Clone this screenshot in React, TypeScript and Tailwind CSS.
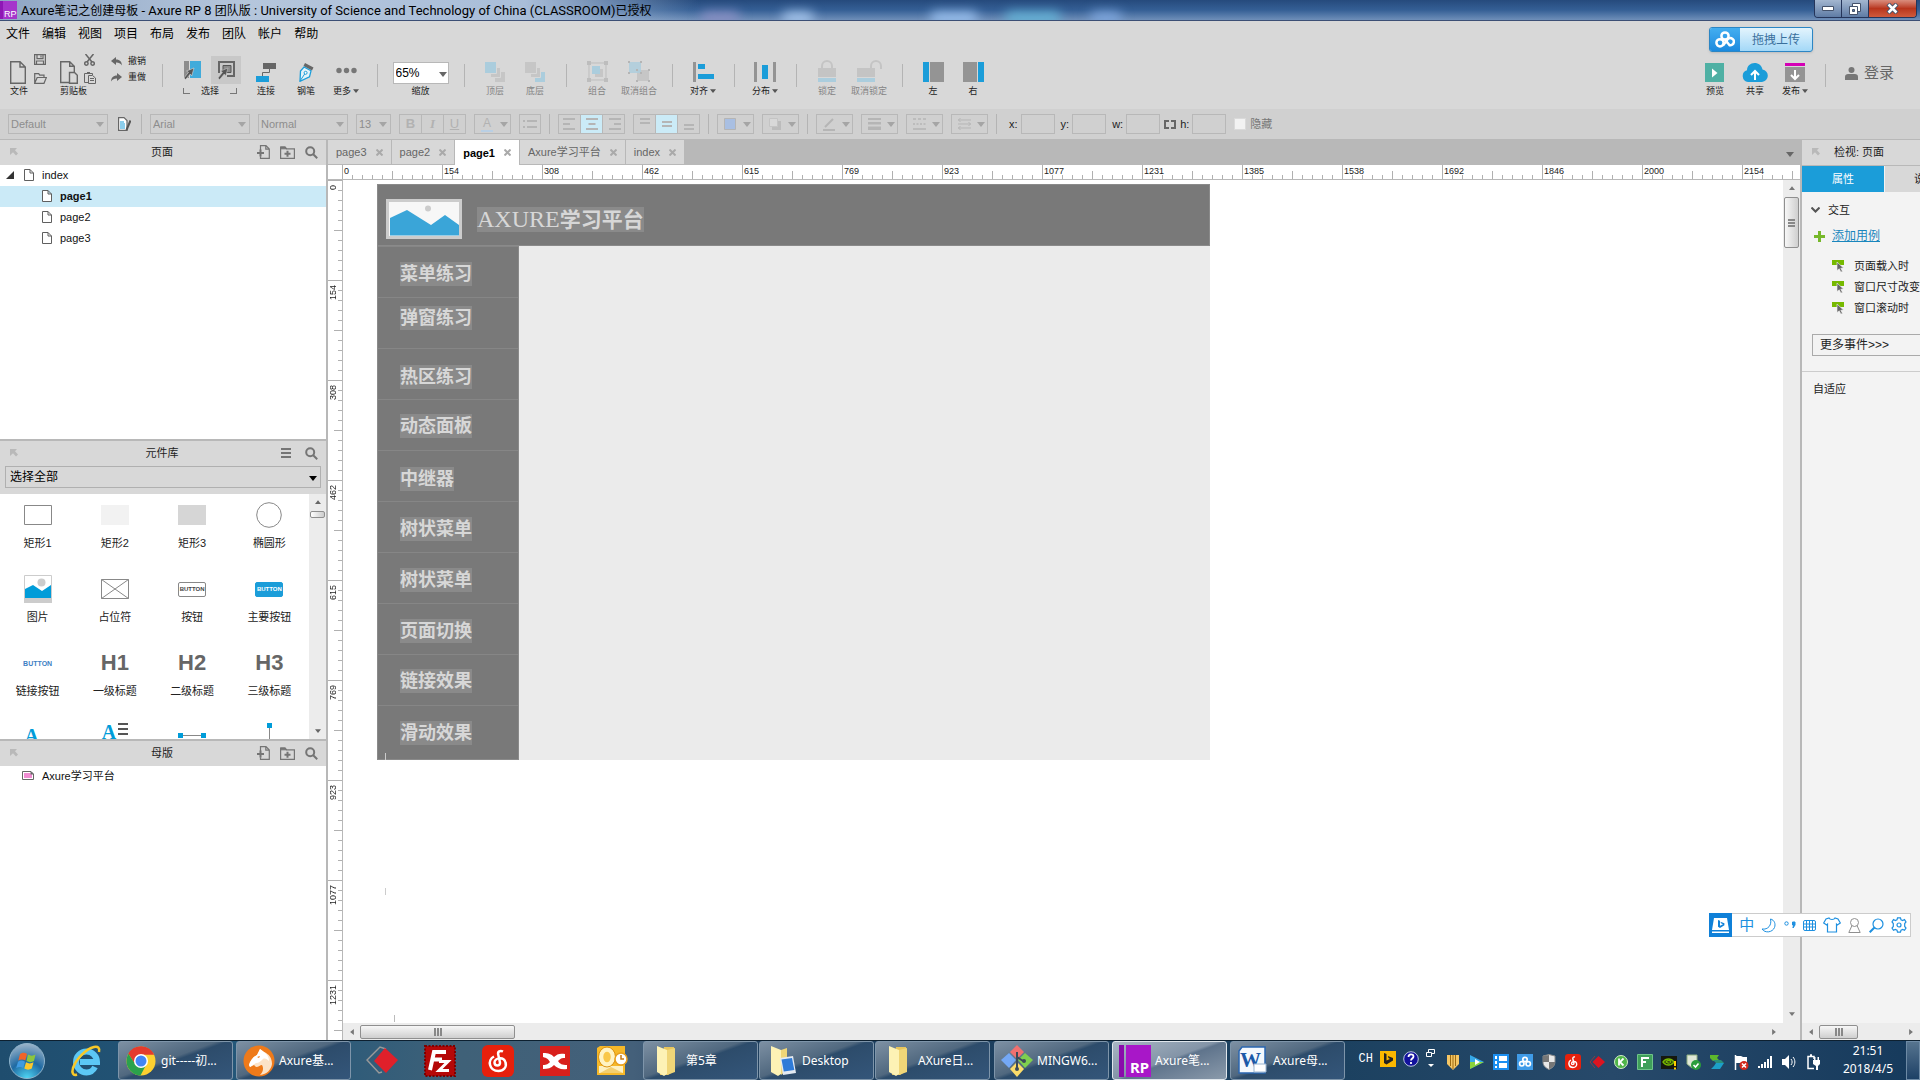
import React from "react";
import { clsx } from "clsx";

/* ---------- shared pieces ---------- */

const Caret = ({ className }: { className?: string }) => (
  <svg className={className} width="8" height="5" viewBox="0 0 8 5" fill="currentColor" aria-hidden="true">
    <path d="M0 0h8L4 5z" />
  </svg>
);

const Separator = () => (
  <div className="flex w-[22px] shrink-0 justify-center pt-2.5">
    <div className="h-[23px] w-px bg-[#b4b4b4]" />
  </div>
);

interface ToolProps {
  label: string;
  children: React.ReactNode;
  disabled?: boolean;
  caret?: boolean;
  wide?: boolean;
}

const Tool = ({ label, children, disabled, caret, wide }: ToolProps) => (
  <button
    type="button"
    disabled={disabled}
    className={clsx(
      "flex shrink-0 flex-col items-center",
      wide ? "w-11" : "w-10",
      disabled ? "text-[#858585]" : "text-[#222]"
    )}
  >
    <span className="flex h-[30px] items-end pb-0.5">{children}</span>
    <span className="flex h-3.5 items-center gap-0.5 text-[9px] leading-[14px] whitespace-nowrap">
      {label}
      {caret && <Caret className="h-1.5 w-1.5 text-[#555]" />}
    </span>
  </button>
);

interface SelectBoxProps {
  label: string;
  value: string;
  className: string;
}

const SelectBox = ({ label, value, className }: SelectBoxProps) => (
  <div className={clsx("relative h-5 shrink-0", className)}>
    <select
      aria-label={label}
      defaultValue={value}
      className="block h-full w-full appearance-none border border-[#b8b8b8] bg-transparent pl-0.5 text-[11px] leading-4 text-[#8d8d8d]"
    >
      <option>{value}</option>
    </select>
    <Caret className="pointer-events-none absolute top-2 right-1 text-[#a5a5a5]" />
  </div>
);

const CornerArrow = () => (
  <svg width="8" height="8" viewBox="0 0 8 8" fill="#b9b9b9" aria-hidden="true">
    <path d="M0 0h7L5 2.200l3 3.300L6 7.500 3 4.200 0 7z" />
  </svg>
);

const AddPageIcon = () => (
  <svg width="13" height="14" viewBox="0 0 13 14" fill="none" stroke="#757575" aria-hidden="true">
    <path d="M3.500 5V.7h5.500l3.300 3.300v9.300H3.500v-2M8.800.7v3.500h3.500" strokeWidth="1.200" />
    <path d="M0 8h7M3.500 4.500v7" strokeWidth="2" />
  </svg>
);

const AddFolderIcon = () => (
  <svg width="15" height="13" viewBox="0 0 15 13" fill="none" stroke="#757575" aria-hidden="true">
    <path d="M.6 12.400V1h4.600l1.300 1.800h7.900v9.600z" strokeWidth="1.200" />
    <path d="M.6 1h4.600l1.300 1.800H.6z" fill="#757575" />
    <path d="M4.500 7.700h6M7.500 4.700v6" strokeWidth="2" />
  </svg>
);

const SearchIcon = () => (
  <svg width="13" height="13" viewBox="0 0 13 13" fill="none" stroke="#757575" strokeWidth="2" aria-hidden="true">
    <circle cx="5.200" cy="5.200" r="4" />
    <path d="M8 8l4.200 4.200" />
  </svg>
);

const ListIcon = () => (
  <svg width="10" height="10" viewBox="0 0 10 10" stroke="#757575" strokeWidth="2" aria-hidden="true">
    <path d="M0 1h10M0 5h10M0 9h10" />
  </svg>
);

const PageIcon = ({ className }: { className?: string }) => (
  <svg className={className} width="10" height="12" viewBox="0 0 10 12" fill="#fff" stroke="#5f5f5f" aria-hidden="true">
    <path d="M.5.5h5.500l3.500 3.500v7.500h-9zM6 .5V4h3.500" />
  </svg>
);

const PanelHeader = ({ title, children }: { title: string; children: React.ReactNode }) => (
  <div className="relative flex h-[25px] shrink-0 items-center justify-between bg-[#d8d8d8] pr-2 pb-px pl-2.5">
    <CornerArrow />
    <h2 className="absolute inset-x-0 pr-0.5 text-center text-[11px] leading-4 text-[#222]">{title}</h2>
    <div className="relative flex items-center gap-2.5">{children}</div>
  </div>
);

/* ---------- title bar and menu ---------- */

const TitleBar = () => (
  <header className="relative flex h-[21px] shrink-0 items-center overflow-hidden border-b border-[#3c4f75] bg-[linear-gradient(180deg,#264a7c_0%,#355f95_50%,#6f8fb9_100%)]">
    <div className="absolute inset-y-0 left-0 w-[700px] bg-[linear-gradient(90deg,#8fa6c4_0%,#b5c6dc_35%,#a9bed9_75%,#a9bed900_100%)]" />
    <div className="absolute top-3 left-[700px] h-3 w-10 rounded-full bg-[#8a8fc4] blur-[6px]" />
    <div className="absolute top-3 left-[782px] h-3 w-8 rounded-full bg-[#a9c9f0] blur-[6px]" />
    <div className="absolute top-3 left-[930px] h-3 w-12 rounded-full bg-[#9cc3f2] blur-[6px]" />
    <div className="absolute top-3 left-[1005px] h-3 w-14 rounded-full bg-[#63b5d8] blur-[6px]" />
    <div className="absolute top-3 left-[1090px] h-3 w-8 rounded-full bg-[#7fa8e0] blur-[6px]" />
    <svg className="relative shrink-0" width="17" height="18" viewBox="0 0 17 18" aria-hidden="true">
      <path fill="#8e17b5" d="M0 0h3v18H0z" />
      <path fill="#a535cb" d="M3 0h14v18H3z" />
      <text x="4" y="16" fontSize="9" fontFamily="Liberation Sans" fill="#fff">RP</text>
    </svg>
    <h1 className="relative ml-1 pt-0.5 font-['Roboto','Noto_Sans_CJK_SC',sans-serif] text-[13px] leading-4 whitespace-nowrap text-black">
      Axure<span className="text-[12px]">笔记之创建母板</span> - Axure RP 8 <span className="text-[12px]">团队版</span> : University of
      Science and Technology of China (CLASSROOM)<span className="text-[12px]">已授权</span>
    </h1>
    <div className="relative mr-[3px] ml-auto flex h-[18px] self-start overflow-hidden rounded-b-[4px] border border-t-0 border-[#25355a]">
      <button type="button" aria-label="最小化" className="flex w-[27px] items-center justify-center border-r border-[#25355a] bg-linear-to-b from-[#a3b6d0] to-[#5f7ca5]">
        <svg width="12" height="5" viewBox="0 0 12 5"><path fill="#fff" stroke="#44526b" d="M.5.5h11v4H.5z" /></svg>
      </button>
      <button type="button" aria-label="还原" className="flex w-[27px] items-center justify-center border-r border-[#25355a] bg-linear-to-b from-[#a3b6d0] to-[#5f7ca5]">
        <svg width="12" height="12" viewBox="0 0 12 12" fill="#fff" stroke="#44526b">
          <path d="M3.500.5h8v8h-8z" />
          <path d="M.5 3.500h8v8h-8z" />
          <path fill="#5f7ca5" d="M3.500 6.500h2v2h-2z" />
        </svg>
      </button>
      <button type="button" aria-label="关闭" className="flex w-[47px] items-center justify-center bg-linear-to-b from-[#d98d7d] via-[#b8351c] to-[#cf5a3c]">
        <svg width="13" height="11" viewBox="0 0 13 11">
          <path d="M2 1l9 9M11 1L2 10" stroke="#44526b" strokeWidth="4.500" />
          <path d="M2.500 1.500l8 8M10.500 1.500l-8 8" stroke="#fff" strokeWidth="2.500" />
        </svg>
      </button>
    </div>
  </header>
);

const MENUS = ["文件", "编辑", "视图", "项目", "布局", "发布", "团队", "帐户", "帮助"];

const MenuBar = () => (
  <nav className="flex h-[25px] shrink-0 items-center gap-3 bg-[#d8d8d8] px-1.5 text-[12px] leading-4 text-black">
    {MENUS.map((menu) => (
      <button type="button" key={menu}>{menu}</button>
    ))}
  </nav>
);

const UploadWidget = () => (
  <button
    type="button"
    className="absolute top-[27px] right-[107px] flex h-[25px] w-[104px] overflow-hidden rounded-[3px] border border-[#2c86c4] bg-linear-to-b from-[#e3f4fd] to-[#a3d8f7] shadow"
  >
    <span className="flex h-full w-[30px] shrink-0 items-center justify-center bg-linear-to-b from-[#43aef0] to-[#1b8ade]">
      <svg width="20" height="17" viewBox="0 0 20 17" fill="none" stroke="#fff" strokeWidth="2.500" aria-hidden="true">
        <circle cx="10" cy="5" r="3.600" />
        <circle cx="5" cy="11.800" r="3.600" />
        <path d="M10 8.500l4.500 5.700a3.600 3.600 0 1 0-2.600-4.800L8 14.500" />
      </svg>
    </span>
    <span className="flex-1 text-center text-[12px] leading-[24px] text-[#3a6f9c]">拖拽上传</span>
  </button>
);

/* ---------- main toolbar ---------- */

const Toolbar = () => (
  <div className="flex h-[63px] shrink-0 bg-[#d8d8d8] pt-2">
    <div className="ml-2.5 w-[50px] shrink-0 text-[9px] leading-[14px] text-[#222]">
      <div className="flex h-[30px] items-end gap-2">
        <button type="button" aria-label="新建">
          <svg width="16" height="23" viewBox="0 0 16 23" fill="none" stroke="#666" strokeWidth="1.400">
            <path d="M.7.7h9.300l5.300 5.300v16.300H.7zM10 .7V6h5.300" />
          </svg>
        </button>
        <div className="flex h-full flex-col justify-between">
          <button type="button" aria-label="保存">
            <svg width="12" height="11" viewBox="0 0 12 11" fill="none" stroke="#666" strokeWidth="1.200">
              <path d="M.6.6h10.800v9.800H.6zM3 .6v4h6v-4M2.500 10.400V7h7v3.400M7 1.500v2" />
            </svg>
          </button>
          <button type="button" aria-label="打开">
            <svg width="13" height="11" viewBox="0 0 13 11" fill="none" stroke="#666" strokeWidth="1.200">
              <path d="M.7 10V.7h4l1 1.500H10V4M.7 10.300L3.200 4.500h9.200l-2.400 5.800z" />
            </svg>
          </button>
        </div>
      </div>
      文件
    </div>

    <div className="w-[51px] shrink-0 text-[9px] leading-[14px] text-[#222]">
      <div className="flex h-[30px] items-end gap-1.5">
        <button type="button" aria-label="粘贴">
          <svg width="18" height="23" viewBox="0 0 18 23" fill="none" stroke="#666" strokeWidth="1.400">
            <path d="M9 21.500H.7V.7h9l4.600 4.600v6M9.700.7v4.600h4.600" />
            <path d="M9.500 11.500h5l2.800 2.800v8H9.500z" />
          </svg>
        </button>
        <div className="flex h-full flex-col justify-between">
          <button type="button" aria-label="剪切">
            <svg width="11" height="12" viewBox="0 0 11 12" fill="none" stroke="#666" strokeWidth="1.500">
              <path d="M1.500 0L8 8M9.500 0L3 8" />
              <circle cx="2.400" cy="9.500" r="1.700" />
              <circle cx="8.600" cy="9.500" r="1.700" />
            </svg>
          </button>
          <button type="button" aria-label="复制">
            <svg width="12" height="12" viewBox="0 0 12 12" fill="none" stroke="#666">
              <path d="M4 10.500H.5v-9h8V3M3 .5h3" />
              <path d="M4.500 3.500h4l3 2.500v5.500h-7zM6 6.500h4M6 8.500h4" />
            </svg>
          </button>
        </div>
      </div>
      剪贴板
    </div>

    <div className="flex h-[30px] w-10 shrink-0 flex-col justify-between text-[9px] leading-[14px] text-[#222]">
      <button type="button" className="flex items-center gap-1.5">
        <svg width="11" height="9" viewBox="0 0 11 9" fill="#666"><path d="M0 4l5-4v2.500c4 0 6 2.500 5.800 6C9.500 6.200 7.500 5.500 5 5.600V8z" /></svg>
        撤销
      </button>
      <button type="button" className="flex items-center gap-1.5">
        <svg width="11" height="9" viewBox="0 0 11 9" fill="#666"><path d="M11 4L6 0v2.500C2 2.500 0 5 .2 8.500 1.500 6.200 3.500 5.500 6 5.600V8z" /></svg>
        重做
      </button>
    </div>

    <Separator />

    <div className="w-[73px] shrink-0">
      <div className="flex h-[30px] items-end gap-1 pl-1">
        <button type="button" aria-label="相交选中" className="flex h-7 w-[30px] items-center justify-center">
          <svg width="17" height="19" viewBox="0 0 17 19">
            <path fill="#8c8c8c" d="M0 0h5v17H0z" />
            <path fill="#41abdb" d="M6 0h11v17H6z" />
            <path fill="#555" stroke="#d8d8d8" strokeWidth=".6" d="M10 7L2.500 10l2 1.300L0 17l1.700 1.500L6.300 13l1.400 2z" />
          </svg>
        </button>
        <button type="button" aria-label="包含选中" className="flex h-7 w-[30px] items-center justify-center bg-[#c8c8c8]">
          <svg width="17" height="19" viewBox="0 0 17 19">
            <path fill="none" stroke="#666" strokeWidth="2" d="M1 12V1h15v14H9" />
            <path fill="#8c8c8c" stroke="#555" d="M5 4.500h8v7H5z" />
            <path fill="#555" stroke="#c8c8c8" strokeWidth=".6" d="M10 7L2.500 10l2 1.300L0 17l1.700 1.500L6.300 13l1.400 2z" />
          </svg>
        </button>
      </div>
      <div className="flex h-3.5 items-center gap-[11px] pl-2.5 text-[9px] leading-[14px] text-[#222]">
        <span className="h-1.5 w-[7px] border-b border-l border-[#777]" />
        选择
        <span className="h-1.5 w-[7px] border-r border-b border-[#777]" />
      </div>
    </div>

    <Tool label="连接">
      <svg width="20" height="20" viewBox="0 0 20 20">
        <path fill="#666" d="M7 1h13v6H7z" />
        <path fill="#1b9dd9" d="M0 14h13v6H0z" />
        <path fill="none" stroke="#666" d="M13.500 7v3.500h-7V14" />
      </svg>
    </Tool>
    <Tool label="钢笔">
      <svg width="15" height="19" viewBox="0 0 15 19">
        <path fill="#666" d="M6 0l8.500 4.500L13 7.500 4.500 3z" />
        <path fill="#e5f3fa" stroke="#1b9dd9" strokeWidth="1.300" d="M5 4l7 3.800-1.500 6L1 18.300 1.500 8z" />
        <path fill="none" stroke="#1b9dd9" d="M1 18l5-7.500" />
        <circle cx="6.600" cy="9.800" r="1.500" fill="#fff" stroke="#1b9dd9" />
      </svg>
    </Tool>
    <Tool label="更多" caret>
      <svg width="21" height="20" viewBox="0 0 21 20" fill="#777">
        <circle cx="3" cy="8.500" r="2.700" />
        <circle cx="10.500" cy="8.500" r="2.700" />
        <circle cx="18" cy="8.500" r="2.700" />
      </svg>
    </Tool>

    <Separator />

    <div className="flex w-[65px] shrink-0 flex-col items-center">
      <div className="relative mt-2 h-[22px] w-14">
        <select
          id="zoom"
          defaultValue="65%"
          className="block h-full w-full appearance-none border border-[#b8b8b8] bg-white pl-0.5 text-[12px] leading-4 text-black"
        >
          <option>65%</option>
        </select>
        <Caret className="pointer-events-none absolute top-2.5 right-0.5 text-[#666]" />
      </div>
      <label htmlFor="zoom" className="text-[9px] leading-[14px] text-[#222]">缩放</label>
    </div>

    <Separator />

    <Tool label="顶层" disabled>
      <svg width="20" height="20" viewBox="0 0 20 20">
        <path fill="#c6c6c6" d="M10 10h10v10H10z" />
        <path fill="#c6c6c6" stroke="#d8d8d8" d="M5.500 5.500h10v10h-10z" />
        <path fill="#abcddd" stroke="#d8d8d8" d="M-.5-.5h12v12h-12z" />
      </svg>
    </Tool>
    <Tool label="底层" disabled>
      <svg width="20" height="20" viewBox="0 0 20 20">
        <path fill="#abcddd" d="M10 10h10v10H10z" />
        <path fill="#c6c6c6" stroke="#d8d8d8" d="M5.500 5.500h10v10h-10z" />
        <path fill="#c6c6c6" stroke="#d8d8d8" d="M-.5-.5h12v12h-12z" />
      </svg>
    </Tool>

    <Separator />

    <Tool label="组合" disabled>
      <svg width="21" height="21" viewBox="0 0 21 21">
        <path fill="none" stroke="#bdbdbd" d="M2 2h17v17H2z" />
        <path fill="#c6c6c6" d="M8 8h8v8H8z" />
        <path fill="#abcddd" d="M5 5h8v8H5z" />
        <path fill="#bdbdbd" d="M0 0h4v4H0zM17 0h4v4h-4zM0 17h4v4H0zM17 17h4v4h-4z" />
      </svg>
    </Tool>
    <Tool label="取消组合" disabled wide>
      <svg width="22" height="21" viewBox="0 0 22 21">
        <path fill="#c6c6c6" d="M9 9h12v11H9z" />
        <path fill="#abcddd" fillOpacity=".8" d="M1 1h12v11H1z" />
        <path fill="#b5b5b5" d="M0 0h2v2H0zM12 0h2v2h-2zM0 11h2v2H0zM12 11h2v2h-2zM8 8h2v2H8zM20 8h2v2h-2zM8 19h2v2H8zM20 19h2v2h-2z" />
      </svg>
    </Tool>

    <Separator />

    <Tool label="对齐" caret>
      <svg width="21" height="20" viewBox="0 0 21 20">
        <path fill="#949494" d="M0 0h3v20H0z" />
        <path fill="#1b9dd9" d="M5 2h7v5H5zM5 12h16v5H5z" />
      </svg>
    </Tool>

    <Separator />

    <Tool label="分布" caret>
      <svg width="22" height="20" viewBox="0 0 22 20">
        <path fill="#949494" d="M0 0h3v20H0zM19 0h3v20h-3z" />
        <path fill="#1b9dd9" d="M8 3h6v14H8z" />
      </svg>
    </Tool>

    <Separator />

    <Tool label="锁定" disabled>
      <svg width="18" height="22" viewBox="0 0 18 22">
        <path fill="none" stroke="#c4c4c4" strokeWidth="2" d="M4 8V6a5 5 0 0 1 10 0v2" />
        <path fill="#c4c4c4" d="M0 8h18v9H0z" />
        <path fill="#abcddd" d="M0 18h18v4H0z" />
      </svg>
    </Tool>
    <Tool label="取消锁定" disabled wide>
      <svg width="25" height="22" viewBox="0 0 25 22">
        <path fill="none" stroke="#c4c4c4" strokeWidth="2" d="M14 8V6a5 5 0 0 1 10 0v3" />
        <path fill="#c4c4c4" d="M0 8h18v9H0z" />
        <path fill="#abcddd" d="M0 18h18v4H0z" />
      </svg>
    </Tool>

    <Separator />

    <Tool label="左">
      <svg width="21" height="20" viewBox="0 0 21 20">
        <path fill="#1b9dd9" d="M0 0h6v20H0z" />
        <path fill="#949494" d="M7 0h14v20H7z" />
      </svg>
    </Tool>
    <Tool label="右">
      <svg width="21" height="20" viewBox="0 0 21 20">
        <path fill="#949494" d="M0 0h14v20H0z" />
        <path fill="#1b9dd9" d="M15 0h6v20h-6z" />
      </svg>
    </Tool>

    <div className="ml-auto flex pr-[26px]">
      <Tool label="预览">
        <svg width="19" height="19" viewBox="0 0 19 19">
          <path fill="#4fb0a4" d="M0 0h19v19H0z" />
          <path fill="#fff" d="M7 5.500l5.500 4.500L7 14.500z" />
        </svg>
      </Tool>
      <Tool label="共享">
        <svg width="26" height="19" viewBox="0 0 26 19">
          <path fill="#1b9dd9" d="M6 19a6 6 0 0 1-1-11.700C5 3 8.500 0 12.500 0S20 2.700 20.500 6.500A6.300 6.300 0 0 1 20 19z" />
          <path fill="none" stroke="#fff" strokeWidth="2" d="M13 17V8.500M9 12l4-4 4 4" />
        </svg>
      </Tool>
      <Tool label="发布" caret>
        <svg width="20" height="19" viewBox="0 0 20 19">
          <path fill="#d400b5" d="M0 0h20v3H0z" />
          <path fill="#949494" d="M0 4h20v15H0z" />
          <path fill="none" stroke="#fff" strokeWidth="2" d="M10 7v8M6 12l4 4 4-4" />
        </svg>
      </Tool>
      <Separator />
      <button type="button" className="flex h-[38px] items-center gap-1.5 pl-2 text-[15px] leading-5 text-[#666]">
        <svg width="13" height="13" viewBox="0 0 13 13" fill="#777">
          <circle cx="6.500" cy="3" r="3" />
          <path d="M0 13V9.500C0 8 1.500 7 3 7h7c1.500 0 3 1 3 2.500V13z" />
        </svg>
        登录
      </button>
    </div>
  </div>
);

/* ---------- format bar ---------- */

const FormatSeparator = () => <div className="h-5 w-px shrink-0 bg-[#b4b4b4]" />;

const Segment = ({ children, active, label }: { children: React.ReactNode; active?: boolean; label: string }) => (
  <button
    type="button"
    aria-label={label}
    className={clsx(
      "flex h-full flex-1 items-center justify-center border-r border-[#b8b8b8] text-[13px] leading-4 text-[#b2b2b2] last:border-r-0",
      active && "bg-[#cbebf7]"
    )}
  >
    {children}
  </button>
);

const Segments = ({ children, single }: { children: React.ReactNode; single?: boolean }) => (
  <div className={clsx("flex h-5 shrink-0 overflow-hidden border border-[#b8b8b8]", single ? "w-[22px]" : "w-[67px]")}>
    {children}
  </div>
);

const DropButton = ({ children, label }: { children: React.ReactNode; label: string }) => (
  <button
    type="button"
    aria-label={label}
    className="flex h-5 w-[37px] shrink-0 items-center justify-between border border-[#b8b8b8] pr-0.5 pl-1.5 text-[#a5a5a5]"
  >
    {children}
    <Caret />
  </button>
);

const Lines = ({ d }: { d: string }) => (
  <svg width="14" height="14" viewBox="0 0 14 14" fill="none" stroke="#b5b5b5" strokeWidth="2">
    <path d={d} />
  </svg>
);

const CoordInput = ({ name }: { name: string }) => (
  <label className="flex items-center gap-[3px] text-[11px] leading-4 text-[#222]">
    {name}:
    <input type="text" className="h-5 w-[34px] border border-[#b8b8b8] bg-transparent" />
  </label>
);

const FormatBar = () => (
  <div className="flex h-[31px] shrink-0 items-center gap-2 border-b border-[#b8b8b8] bg-[#d0d0d0] px-2">
    <SelectBox label="样式" value="Default" className="w-[100px]" />
    <button type="button" aria-label="样式管理" className="mx-0.5">
      <svg width="13" height="14" viewBox="0 0 13 14" fill="none">
        <path fill="#fff" stroke="#666" strokeWidth="1.200" d="M.6.6H6l3 3v9.800H.6z" />
        <path stroke="#1b9dd9" d="M2 5h4M2 7h5M2 9h5M2 11h5" />
        <path stroke="#555" strokeWidth="2" d="M12.500 3.500L8.500 13" />
      </svg>
    </button>
    <FormatSeparator />
    <SelectBox label="字体" value="Arial" className="w-[100px]" />
    <SelectBox label="字型" value="Normal" className="w-[90px]" />
    <SelectBox label="字号" value="13" className="w-[35px]" />
    <Segments>
      <Segment label="粗体"><b>B</b></Segment>
      <Segment label="斜体"><i className="font-['Liberation_Serif'] font-bold">I</i></Segment>
      <Segment label="下划线"><u>U</u></Segment>
    </Segments>
    <DropButton label="文字颜色">
      <span className="border-b-2 border-[#b9cfe4] px-0.5 text-[12px] leading-[13px] text-[#b2b2b2]">A</span>
    </DropButton>
    <Segments single>
      <Segment label="项目符号"><Lines d="M0 4h2M4 4h10M0 10h2M4 10h10" /></Segment>
    </Segments>
    <FormatSeparator />
    <Segments>
      <Segment label="左对齐"><Lines d="M0 2h12M0 7h7M0 12h12" /></Segment>
      <Segment label="居中" active><Lines d="M1 2h12M3.500 7h7M1 12h12" /></Segment>
      <Segment label="右对齐"><Lines d="M2 2h12M7 7h7M2 12h12" /></Segment>
    </Segments>
    <Segments>
      <Segment label="顶部对齐"><Lines d="M2 2h10M2 6h10" /></Segment>
      <Segment label="垂直居中" active><Lines d="M2 5h10M2 9h10" /></Segment>
      <Segment label="底部对齐"><Lines d="M2 8h10M2 12h10" /></Segment>
    </Segments>
    <FormatSeparator />
    <DropButton label="填充颜色">
      <svg width="12" height="12" viewBox="0 0 12 12"><path fill="#a9bfe2" stroke="#b5b5b5" d="M.5.5h11v11H.5z" /></svg>
    </DropButton>
    <DropButton label="外部阴影">
      <svg width="12" height="12" viewBox="0 0 12 12">
        <path fill="#bcbcbc" d="M3 3h9v9H3z" />
        <path fill="#d8d8d8" stroke="#c4c4c4" d="M.5.5h8v8h-8z" />
      </svg>
    </DropButton>
    <FormatSeparator />
    <DropButton label="线段颜色">
      <svg width="13" height="13" viewBox="0 0 13 13" stroke="#b5b5b5" strokeWidth="2"><path d="M0 12h12M2 9l8-8" /></svg>
    </DropButton>
    <DropButton label="线宽">
      <svg width="13" height="12" viewBox="0 0 13 12" fill="#b5b5b5"><path d="M0 0h13v2H0zM0 4h13v2.500H0zM0 8.500h13V12H0z" /></svg>
    </DropButton>
    <DropButton label="线段类型">
      <svg width="13" height="12" viewBox="0 0 13 12" stroke="#b5b5b5" strokeWidth="1.500">
        <path d="M0 1h13" strokeDasharray="3 2" />
        <path d="M0 6h13" strokeDasharray="2 1.500" />
        <path d="M0 11h13" />
      </svg>
    </DropButton>
    <DropButton label="箭头样式">
      <svg width="13" height="12" viewBox="0 0 13 12" fill="none" stroke="#b5b5b5">
        <path d="M0 2h13M2.500 0L.5 2l2 2M0 6h13M10.500 4l2 2-2 2M0 10h13M2.500 8l-2 2 2 2" />
      </svg>
    </DropButton>
    <FormatSeparator />
    <div className="ml-1 flex items-center gap-1.5">
      <CoordInput name="x" />
      <CoordInput name="y" />
      <CoordInput name="w" />
      <button type="button" aria-label="保持宽高比" className="-mx-0.5">
        <svg width="12" height="9" viewBox="0 0 12 9" fill="none" stroke="#666" strokeWidth="2"><path d="M5 1H1v7h4M7 1h4v7H7" /></svg>
      </button>
      <CoordInput name="h" />
    </div>
    <label className="flex items-center gap-1 text-[11px] leading-4 text-[#777]">
      <input type="checkbox" className="size-3 appearance-none border border-[#dadada] bg-[#f2f2f2]" />
      隐藏
    </label>
  </div>
);

/* ---------- left panels ---------- */

const PagesPanel = () => (
  <section className="flex h-[299px] shrink-0 flex-col bg-white">
    <PanelHeader title="页面">
      <button type="button" aria-label="添加页面"><AddPageIcon /></button>
      <button type="button" aria-label="添加文件夹"><AddFolderIcon /></button>
      <button type="button" aria-label="搜索页面"><SearchIcon /></button>
    </PanelHeader>
    <ul className="text-[11px] leading-4 text-[#111]">
      <li className="flex h-[21px] items-center pb-px pl-1.5">
        <svg width="8" height="8" viewBox="0 0 8 8"><path fill="#333" d="M8 0v8H0z" /></svg>
        <PageIcon className="mr-2 ml-2.5" />
        index
      </li>
      {["page1", "page2", "page3"].map((page) => (
        <li
          key={page}
          className={clsx("flex h-[21px] items-center gap-2 pb-px pl-[42px]", page === "page1" && "bg-[#cbeaf7] font-bold")}
        >
          <PageIcon />
          {page}
        </li>
      ))}
    </ul>
  </section>
);

const WIDGETS: { label: string; icon: React.ReactNode }[] = [
  { label: "矩形1", icon: <svg width="28" height="20"><path fill="#fff" stroke="#888" d="M.5.5h27v19H.5z" /></svg> },
  { label: "矩形2", icon: <svg width="28" height="20"><path fill="#f2f2f2" d="M0 0h28v20H0z" /></svg> },
  { label: "矩形3", icon: <svg width="28" height="20"><path fill="#d6d6d6" d="M0 0h28v20H0z" /></svg> },
  { label: "椭圆形", icon: <svg width="26" height="26"><circle cx="13" cy="13" r="12.300" fill="#fff" stroke="#888" /></svg> },
  {
    label: "图片",
    icon: (
      <svg width="28" height="28">
        <path fill="#fff" stroke="#ccc" d="M.5.5h27v27H.5z" />
        <path fill="#ccc" d="M0 23h28v5H0z" />
        <circle cx="17.500" cy="7.500" r="4" fill="#ccc" />
        <path fill="#009cd9" d="M1 14l8-4 9 6 9-6v13H1z" />
      </svg>
    ),
  },
  { label: "占位符", icon: <svg width="28" height="20"><path fill="#fff" stroke="#888" d="M.5.5h27v19H.5zM.5.5l27 19M27.500.5l-27 19" /></svg> },
  { label: "按钮", icon: <span className="rounded-[2px] border border-[#888] text-center text-[6px] leading-[13px] font-bold text-[#444] w-7">BUTTON</span> },
  { label: "主要按钮", icon: <span className="w-7 rounded-[2px] border border-[#1b9dd9] bg-[#1b9dd9] text-center text-[6px] leading-[13px] font-bold text-white">BUTTON</span> },
  { label: "链接按钮", icon: <span className="text-[7px] leading-[13px] font-bold text-[#3d80c4]">BUTTON</span> },
  { label: "一级标题", icon: <span className="text-[22px] leading-6 font-bold text-[#666]">H1</span> },
  { label: "二级标题", icon: <span className="text-[22px] leading-6 font-bold text-[#666]">H2</span> },
  { label: "三级标题", icon: <span className="text-[22px] leading-6 font-bold text-[#666]">H3</span> },
];

const LibraryPanel = () => (
  <section className="flex h-[300px] shrink-0 flex-col border-t-2 border-[#b8b8b8] bg-white">
    <PanelHeader title="元件库">
      <button type="button" aria-label="选项" className="mr-1"><ListIcon /></button>
      <button type="button" aria-label="搜索元件"><SearchIcon /></button>
    </PanelHeader>
    <div className="relative h-7 shrink-0 bg-[#d8d8d8] px-[5px]">
      <select
        aria-label="元件库"
        defaultValue="选择全部"
        className="block h-[22px] w-full appearance-none border border-[#b0b0b0] bg-transparent pl-1 text-[12px] leading-4 text-black"
      >
        <option>选择全部</option>
      </select>
      <Caret className="pointer-events-none absolute top-2.5 right-[9px] text-black" />
    </div>
    <div className="flex min-h-0 flex-1">
      <div className="grid flex-1 auto-rows-[74px] grid-cols-4 overflow-hidden">
        {WIDGETS.map(({ label, icon }) => (
          <div key={label} className="flex flex-col items-center gap-[7px] pt-[7px] pr-0.5">
            <div className="flex h-7 items-center">{icon}</div>
            <div className="text-[11px] leading-[14px] text-[#222]">{label}</div>
          </div>
        ))}
        <div className="flex justify-center pt-2.5 pr-0.5">
          <span className="mr-3 font-['Liberation_Serif'] text-[20px] leading-5 font-bold text-[#009cd9]">A</span>
        </div>
        <div className="flex items-start justify-center gap-0.5 pt-1.5 pr-0.5">
          <span className="font-['Liberation_Serif'] text-[20px] leading-5 font-bold text-[#009cd9]">A</span>
          <svg width="10" height="14" stroke="#555" strokeWidth="2"><path d="M0 2h10M0 7h10M0 12h10" /></svg>
        </div>
        <div className="flex justify-center pt-3 pr-0.5">
          <svg width="28" height="10"><path stroke="#888" d="M0 7.500h28" /><path fill="#009cd9" d="M0 5h5v5H0zM23 5h5v5h-5z" /></svg>
        </div>
        <div className="flex justify-center pt-1.5 pr-0.5">
          <svg width="6" height="30"><path stroke="#888" d="M3.500 5v25" /><path fill="#009cd9" d="M1 1h5v5H1z" /></svg>
        </div>
      </div>
      <div className="flex w-[17px] flex-col items-center bg-[#ececec] py-1.5 text-[#666]">
        <Caret className="h-1 w-1.5 rotate-180" />
        <div className="mt-[7px] h-[7px] w-[15px] rounded-[2px] border border-[#8f8f8f] bg-linear-to-r from-white to-[#ccc]" />
        <Caret className="mt-auto h-1 w-1.5" />
      </div>
    </div>
  </section>
);

const MastersPanel = () => (
  <section className="flex min-h-0 flex-1 flex-col border-t-2 border-[#b8b8b8] bg-white">
    <PanelHeader title="母版">
      <button type="button" aria-label="添加母版"><AddPageIcon /></button>
      <button type="button" aria-label="添加文件夹"><AddFolderIcon /></button>
      <button type="button" aria-label="搜索母版"><SearchIcon /></button>
    </PanelHeader>
    <div className="flex h-[21px] items-center gap-2 pb-0.5 pl-[22px] text-[11px] leading-4 text-[#111]">
      <svg width="12" height="9" viewBox="0 0 12 9">
        <path fill="#fff" stroke="#666" d="M.5.5h8.500l2.500 2.500v5.500H.5z" />
        <path fill="#f08cd2" d="M2 2h6l2 1.500V7H2z" />
        <path fill="#666" d="M8.500 0L12 3.500H8.500z" />
      </svg>
      Axure学习平台
    </div>
  </section>
);

/* ---------- canvas ---------- */

const TABS = ["page3", "page2", "page1", "Axure学习平台", "index"];

const TabBar = () => (
  <div role="tablist" className="flex h-[25px] shrink-0 bg-[#b8b8b8] text-[11px] leading-4">
    {TABS.map((tab) => (
      <button
        type="button"
        role="tab"
        key={tab}
        aria-selected={tab === "page1"}
        className={clsx(
          "mr-px flex items-center gap-[9px] px-2",
          tab === "page1" ? "bg-white font-bold text-black" : "mb-px bg-[#d8d8d8] text-[#666]"
        )}
      >
        {tab}
        <svg width="7" height="7" viewBox="0 0 7 7" stroke="#aaa" strokeWidth="2"><path d="M.5.5l6 6M6.500.5l-6 6" /></svg>
      </button>
    ))}
    <Caret className="mt-3 mr-1.5 ml-auto text-[#666]" />
  </div>
);

const H_MARKS = [0, 154, 308, 462, 615, 769, 923, 1077, 1231, 1385, 1538, 1692, 1846, 2000, 2154];
const V_MARKS = [0, 154, 308, 462, 615, 769, 923, 1077, 1231];

const HorizontalRuler = () => (
  <div className="flex h-[15px] shrink-0 border-b border-[#b8b8b8] bg-white">
    <div className="w-3.5 shrink-0" />
    <div className="flex min-w-0 flex-1 overflow-hidden">
      {H_MARKS.map((mark) => (
        <div key={mark} className="relative w-[100px] shrink-0">
          <svg className="absolute inset-0" width="100" height="14" stroke="#b0b0b0" aria-hidden="true">
            <path d="M.5 0v14M10.500 10v4M20.500 10v4M30.500 10v4M40.500 10v4M50.500 6v8M60.500 10v4M70.500 10v4M80.500 10v4M90.500 10v4" />
          </svg>
          <span className="absolute top-px left-0.5 text-[9px] leading-[11px] text-[#222]">{mark}</span>
        </div>
      ))}
    </div>
  </div>
);

const VerticalRuler = () => (
  <div className="w-[15px] shrink-0 overflow-hidden border-r border-[#b8b8b8] bg-white">
    {V_MARKS.map((mark) => (
      <div key={mark} className="relative h-[100px]">
        <svg className="absolute inset-0" width="14" height="100" stroke="#b0b0b0" aria-hidden="true">
          <path d="M0 .5h14M10 10.500h4M10 20.500h4M10 30.500h4M10 40.500h4M6 50.500h8M10 60.500h4M10 70.500h4M10 80.500h4M10 90.500h4" />
        </svg>
        <span className="absolute top-[5px] left-0 rotate-180 text-[9px] leading-[11px] text-[#222] [writing-mode:vertical-rl]">
          {mark}
        </span>
      </div>
    ))}
  </div>
);

const NAV_ITEMS = [
  { label: "菜单练习", pad: "pt-[15px]" },
  { label: "弹窗练习", pad: "pt-2" },
  { label: "热区练习", pad: "pt-4" },
  { label: "动态面板", pad: "pt-[14px]" },
  { label: "中继器", pad: "pt-4" },
  { label: "树状菜单", pad: "pt-[15px]" },
  { label: "树状菜单", pad: "pt-[15px]" },
  { label: "页面切换", pad: "pt-[15px]" },
  { label: "链接效果", pad: "pt-[14px]" },
  { label: "滑动效果", pad: "pt-[15px]" },
];

const Artboard = () => (
  <div className="absolute top-1 left-[34px] w-[833px]">
    <div className="flex h-[62px] border border-[#8a8a8a] bg-[#797979]">
      <svg className="mt-3.5 ml-2 shrink-0" width="76" height="40" viewBox="0 0 76 40" aria-hidden="true">
        <path fill="#f7f7f7" stroke="#ccc" strokeWidth="3" d="M1.500 1.500h73v37h-73z" />
        <path fill="#3aa5d8" d="M4 19l17-8 24 15 14-10 14 10v10.500H4z" />
        <circle cx="42" cy="9.500" r="3" fill="#ccc" />
      </svg>
      <div className="mt-[22px] ml-[15px] h-[25px] self-start bg-[#8a8a8a] text-[21px] leading-[25px] font-bold whitespace-nowrap text-[#d7d7d7]">
        <span className="font-['Liberation_Serif'] text-[24px] font-normal">AXURE</span>学习平台
      </div>
    </div>
    <div className="flex">
      <ul className="w-[142px] shrink-0 border-x border-b border-[#8a8a8a] bg-[#797979]">
        {NAV_ITEMS.map(({ label, pad }, index) => (
          <li
            key={index}
            className={clsx("flex h-[51px] items-start border-t border-[#868686] pl-[22px] last:h-[54px]", pad)}
          >
            <span className="h-6 bg-[#8a8a8a] text-[18px] leading-6 font-bold text-[#d7d7d7]">{label}</span>
          </li>
        ))}
      </ul>
      <div className="flex-1 bg-[#ebebeb]" />
    </div>
    {/* page guides */}
    <div className="absolute bottom-0 left-2 h-[7px] w-px bg-[#ccc]" />
    <div className="absolute top-[704px] left-2 h-[7px] w-px bg-[#ccc]" />
    <div className="absolute top-[831px] left-[17px] h-[7px] w-px bg-[#bbb]" />
  </div>
);

const HorizontalScroll = ({ thumb }: { thumb: string }) => (
  <div className="flex h-[17px] shrink-0 items-center bg-[#ececec] px-1.5 text-[#777]">
    <Caret className="h-1 w-1.5 rotate-90" />
    <div
      className={clsx(
        "ml-[5px] flex h-[14px] items-center justify-center gap-px rounded-[2px] border border-[#8f8f8f] bg-linear-to-b from-[#f7f7f7] to-[#cfcfcf]",
        thumb
      )}
    >
      <span className="h-2 w-0.5 bg-[#888]" />
      <span className="h-2 w-0.5 bg-[#888]" />
      <span className="h-2 w-0.5 bg-[#888]" />
    </div>
    <Caret className="ml-auto h-1 w-1.5 -rotate-90" />
  </div>
);

const Workspace = () => (
  <main className="flex min-w-0 flex-1 flex-col border-x-2 border-[#b8b8b8] bg-white">
    <TabBar />
    <HorizontalRuler />
    <div className="flex min-h-0 flex-1">
      <VerticalRuler />
      <div className="flex min-w-0 flex-1 flex-col">
        <div className="relative min-h-0 flex-1 overflow-hidden bg-white">
          <Artboard />
        </div>
        <HorizontalScroll thumb="w-[155px]" />
      </div>
      <div className="flex w-[17px] shrink-0 flex-col items-center bg-[#ececec] pt-1.5 text-[#777]">
        <Caret className="h-1 w-1.5 rotate-180" />
        <div className="mt-[7px] flex h-[51px] w-[15px] flex-col items-center justify-center gap-px rounded-[2px] border border-[#8f8f8f] bg-linear-to-r from-[#f7f7f7] to-[#cfcfcf]">
          <span className="h-0.5 w-[7px] bg-[#888]" />
          <span className="h-0.5 w-[7px] bg-[#888]" />
          <span className="h-0.5 w-[7px] bg-[#888]" />
        </div>
        <Caret className="mt-auto mb-6 h-1 w-1.5" />
      </div>
    </div>
  </main>
);

/* ---------- inspector ---------- */

const Inspector = () => (
  <aside className="flex w-[118px] shrink-0 flex-col overflow-hidden bg-[#f3f3f3] text-[11px] leading-4 whitespace-nowrap text-[#222]">
    <div className="flex h-[25px] shrink-0 items-center gap-3.5 bg-[#d8d8d8] pb-px pl-2.5">
      <CornerArrow />
      检视: 页面
    </div>
    <div className="flex h-[27px] shrink-0 gap-px border-t border-[#b8b8b8]">
      <button type="button" className="w-[82px] shrink-0 bg-[#1b9dd9] text-white">属性</button>
      <button type="button" className="w-20 shrink-0 bg-[#d8d8d8]">说明</button>
    </div>
    <div className="mt-2.5 flex items-center gap-2 pl-[9px]">
      <svg width="9" height="6" viewBox="0 0 9 6" fill="none" stroke="#555" strokeWidth="2"><path d="M.5.5l4 4 4-4" /></svg>
      交互
    </div>
    <div className="mt-2.5 flex items-center gap-[7px] pl-3 text-[12px]">
      <svg width="11" height="11" viewBox="0 0 11 11" stroke="#76b82a" strokeWidth="3"><path d="M0 5.500h11M5.500 0v11" /></svg>
      <a href="#case" className="text-[#1a86bd] underline">添加用例</a>
    </div>
    <ul className="mt-[11px]">
      {["页面载入时", "窗口尺寸改变时", "窗口滚动时"].map((event) => (
        <li key={event} className="flex h-[21px] items-center gap-2.5 pl-[30px]">
          <svg className="shrink-0" width="12" height="12" viewBox="0 0 12 12">
            <path fill="#76b900" d="M0 0h12v5H0z" />
            <path fill="#666" stroke="#f3f3f3" strokeWidth=".6" d="M5 2l6.500 6-2.700.2 1.700 3.200-1.700.6-1.500-3.200L5 10.500z" />
          </svg>
          {event}
        </li>
      ))}
    </ul>
    <button type="button" className="mt-4 ml-2.5 h-[22px] w-[130px] shrink-0 border border-[#aaa] pl-[7px] text-left text-[12px]">
      更多事件&gt;&gt;&gt;
    </button>
    <div className="mt-[15px] border-t border-[#ccc] pt-[9px] pl-[11px]">自适应</div>
    <div className="mt-auto">
      <HorizontalScroll thumb="w-[39px]" />
    </div>
  </aside>
);

/* ---------- input method bar ---------- */

const ImeBar = () => (
  <div className="absolute top-[913px] right-[9px] flex h-6 w-[202px] items-center justify-between border border-[#ccc] bg-white pr-[3px] text-[#1e90e0]">
    <svg className="-my-px -ml-px" width="23" height="24" viewBox="0 0 23 24">
      <path fill="#0f80d8" d="M0 0h23v24H0z" />
      <path fill="#fff" d="M5 5h13l2 12H3zM3 18.500h17V20H3z" />
      <path fill="#0f80d8" d="M9 7l2 .8v5l3-1.500-2-1-.6-1.500 4 1.500v2L11 15l-2-1.200z" />
    </svg>
    <span className="text-[15px] leading-5">中</span>
    <svg width="15" height="15" viewBox="0 0 15 15" fill="none" stroke="currentColor"><path d="M9.500 1c4 1 5.300 5 4 8.500-2 5-9.500 6-12.500 1.500C7 12 11 7 9.500 1z" /></svg>
    <svg width="12" height="8" viewBox="0 0 12 8" fill="none" stroke="currentColor"><circle cx="2.500" cy="2.500" r="1.700" /><path fill="currentColor" d="M8.500 1h2.500v3l-2 3 .5-3h-1z" /></svg>
    <svg width="13" height="11" viewBox="0 0 13 11" fill="none" stroke="currentColor"><rect x=".5" y=".5" width="12" height="10" rx="1.500" /><path d="M.5 4h12M.5 7h12M3.500.5v10M6.500.5v10M9.500.5v10" /></svg>
    <svg width="18" height="16" viewBox="0 0 18 16" fill="none" stroke="currentColor" strokeWidth="1.200"><path d="M6 1c1 2 5 2 6 0l3 1 2.300 4-3 2-.8-.8V15h-9V7.200L3.700 8l-3-2L3 2z" /></svg>
    <svg width="13" height="15" viewBox="0 0 13 15" fill="none" stroke="#8f8f8f"><circle cx="6.500" cy="4.500" r="4" /><path d="M4 7.500L.8 14.500h11.400L9 7.500" /></svg>
    <svg width="15" height="15" viewBox="0 0 15 15" fill="none" stroke="currentColor" strokeWidth="1.200"><circle cx="9" cy="6" r="5" /><path d="M5.500 9.500L.7 14.300" strokeWidth="2" /></svg>
    <svg width="16" height="16" viewBox="0 0 16 16" fill="none" stroke="currentColor" strokeWidth="1.200">
      <circle cx="8" cy="8" r="2" />
      <path d="M6.500.8h3l.5 2 1.700.8 1.800-1L15 5l-1.300 1.500v3L15 11l-1.500 2.300-1.800-.9-1.700.8-.5 2h-3l-.5-2-1.700-.8-1.800.9L1 11l1.300-1.500v-3L1 5l1.500-2.400 1.800 1L6 2.800z" />
    </svg>
  </div>
);

/* ---------- taskbar ---------- */

const FolderIcon = () => (
  <svg width="24" height="32" viewBox="0 0 24 32">
    <path fill="#e8c55c" d="M10 2h10v24l-6 4H6z" />
    <path fill="#fdf2b5" d="M3 1l10 4v24l-3 2-7-4z" />
    <path fill="#f0d678" d="M13 5l8-2v24l-8 3z" />
  </svg>
);

const TaskButton = ({ label, active, children }: { label: string; active?: boolean; children: React.ReactNode }) => (
  <button
    type="button"
    className={clsx(
      "flex h-[39px] w-[115px] shrink-0 items-center gap-1 overflow-hidden rounded-[3px] border pl-1.5 text-left text-[12px] leading-4 whitespace-nowrap text-white",
      active
        ? "border-[#dfe6ec] bg-[linear-gradient(160deg,#a8b6c4_0%,#8394a7_48%,#5f748c_52%,#8a9aab_100%)]"
        : "border-[#7e95aa] bg-[linear-gradient(160deg,#7d90a3_0%,#50687f_45%,#2d4c6b_50%,#34567a_100%)]"
    )}
  >
    <span className="flex w-8 shrink-0 justify-center">{children}</span>
    {label}
  </button>
);

const TrayIcon = ({ children }: { children: React.ReactNode }) => (
  <svg className="shrink-0" width="16" height="16" viewBox="0 0 16 16" fill="none">
    {children}
  </svg>
);

const Taskbar = () => (
  <footer className="flex h-10 shrink-0 items-center border-t border-[#0d2030] bg-[linear-gradient(90deg,#1f4d6e_0%,#24587a_14%,#3f6178_24%,#44607a_33%,#1d3d5c_40%,#1c4160_70%,#27496a_84%,#163a5c_100%)] font-['Noto_Sans','Noto_Sans_CJK_SC',sans-serif]">
    <button type="button" aria-label="开始" className="ml-2 shrink-0">
      <svg width="38" height="38" viewBox="0 0 38 38">
        <defs>
          <radialGradient id="orb" cx=".5" cy="1" r="1">
            <stop offset="0" stopColor="#4fd8f5" />
            <stop offset=".5" stopColor="#1f6aa3" />
            <stop offset="1" stopColor="#9db4c9" />
          </radialGradient>
        </defs>
        <circle cx="19" cy="19" r="17.500" fill="url(#orb)" stroke="#8fb4cc" />
        <path fill="#f0642a" d="M12 12c3-2 5-1.500 7 0l-1.700 6.500c-2.200-1.500-4.500-1.500-7 0z" />
        <path fill="#8cc63e" d="M20 12.500c2.500 1.500 5 1.500 7.500 0L26 19c-2.500 1.500-5 1.500-7.500 0z" />
        <path fill="#3f9ae0" d="M10 19.700c2.500-1.500 4.800-1.500 7 0L15.200 26c-2-1.500-4.500-1.500-7 0z" />
        <path fill="#fcc72c" d="M18 20.300c2.500 1.500 5 1.500 7.500 0l-1.700 6.300c-2.500 1.500-5 1.500-7.500 0z" />
      </svg>
    </button>
    <button type="button" aria-label="Internet Explorer" className="mr-[15px] ml-[23px] shrink-0">
      <svg width="34" height="34" viewBox="0 0 34 34" fill="none">
        <path stroke="#5cc8f5" strokeWidth="6" d="M26 23c-2 4-5 5.500-8.500 5.500A10.500 10.500 0 1 1 28 18H11" />
        <path stroke="#f9c928" strokeWidth="2.500" d="M30 8c1-4-1-6-5-5C17 5 7 15 4 24c-1.500 5 0 8 4 6.500" />
      </svg>
    </button>
    <div className="flex shrink-0 gap-[3px]">
      <TaskButton label="git-----初...">
        <svg width="30" height="30" viewBox="0 0 30 30">
          <circle cx="15" cy="15" r="14.500" fill="#fcd030" />
          <path fill="#e33b2e" d="M15 15L2.500 7.500A14.500 14.500 0 0 1 28 8.500H15z" />
          <path fill="#e33b2e" d="M2.400 7.800A14.500 14.500 0 0 1 28 8.500H15L9 18z" />
          <path fill="#2ba24c" d="M2.400 7.800L9.500 18.500 20 19l-5.500 10.500A14.500 14.500 0 0 1 2.400 7.800z" />
          <circle cx="15" cy="15" r="7" fill="#fff" />
          <circle cx="15" cy="15" r="5.500" fill="#4285f4" />
        </svg>
      </TaskButton>
      <TaskButton label="Axure基...">
        <svg width="32" height="32" viewBox="0 0 32 32">
          <circle cx="16" cy="16" r="15.500" fill="#ee7a1a" />
          <path fill="#fbe3c8" d="M17 4l4 3c5 2 8 6 8 12-1 6-5 10-12 11 3-3 4-7 2-10-2 0-3 2-6 2l-2-2-4 2-1-2c1-4 4-8 8-10z" />
          <path fill="#fff" d="M17 4l4 3c3 2 5 5 5 9-2-2-4-3-6-2-2 2-4 4-7 4l-3 2-3 2-1-2c1-4 4-8 8-10z" />
          <path fill="#ee7a1a" d="M14 12l3-1-1 2z" />
        </svg>
      </TaskButton>
    </div>
    <div className="ml-[15px] flex shrink-0 items-center gap-[26px]">
      <button type="button" aria-label="截图">
        <svg width="32" height="32" viewBox="0 0 32 32">
          <path fill="none" stroke="#999" strokeWidth="1.500" d="M20 4l-6-2L1 15l12 13 3-1" />
          <path fill="#e0202a" d="M19 3l13 12-12 13L8 16z" />
        </svg>
      </button>
      <button type="button" aria-label="FileZilla">
        <svg width="32" height="32" viewBox="0 0 32 32" fill="none">
          <path fill="#b50808" stroke="#7d0000" strokeWidth="2" strokeDasharray="2 1.500" d="M1 1h30v30H1z" />
          <path stroke="#fff" strokeWidth="4" d="M22 7H10L6 25M8.500 14.500H18" />
          <path stroke="#fff" strokeWidth="3" d="M15 16.500h9L15 25.500h10" />
        </svg>
      </button>
      <button type="button" aria-label="网易云音乐">
        <svg width="32" height="32" viewBox="0 0 32 32" fill="none" stroke="#fff" strokeWidth="2.500">
          <rect width="32" height="32" rx="6" fill="#e6200c" stroke="none" />
          <path d="M21 6.500c-3-1.500-5.500 0-4.800 3l1.800 8c.5 4-5.500 4-5.500 0 0-4.500 9-6.500 11 0 1.500 4.500-2 8.500-7 8.500-9.500 0-11.500-11-4.500-14.500" />
        </svg>
      </button>
      <button type="button" aria-label="XMind">
        <svg width="30" height="30" viewBox="0 0 30 30">
          <path fill="#d8201c" d="M0 0h30v30H0z" />
          <path fill="#fff" d="M3 7c6 0 8 1 11 4 3-3 6-4 11-3v4c-4-.5-5 1-7 3 2 3 4 4 9 4v4c-6 1-10-1-13-4-3 3-6 4-11 4v-4c4 0 5-1 7-3-2-3-3-4-7-5z" />
        </svg>
      </button>
      <button type="button" aria-label="Outlook">
        <svg width="32" height="32" viewBox="0 0 32 32" fill="none">
          <path fill="#f6b828" d="M1 3l3-2h25v29H1z" />
          <path fill="#fdf0c0" d="M3 21h24v7H3z" />
          <path fill="#f3cf70" d="M4 28l11-6 12 6z" />
          <ellipse cx="11" cy="12" rx="6" ry="7.500" fill="#f9c74a" stroke="#fff3c4" strokeWidth="4.500" />
          <ellipse cx="11" cy="12" rx="8.500" ry="10" stroke="#dc9414" />
          <circle cx="25" cy="14" r="6" fill="#fff" stroke="#e8a020" strokeWidth="1.500" />
          <path stroke="#c77a10" strokeWidth="1.500" d="M25 10v4h3" />
        </svg>
      </button>
    </div>
    <div className="ml-[15px] flex shrink-0 gap-px">
      <TaskButton label="第5章"><FolderIcon /></TaskButton>
      <TaskButton label="Desktop">
        <svg width="28" height="32" viewBox="0 0 28 32">
          <path fill="#fdf2b5" d="M3 1l10 4v24l-3 2-7-4z" />
          <path fill="#f0d678" d="M13 5l6-2v22l-6 5z" />
          <path fill="#e3eaf2" d="M12 13l13-2 3 17-13 2z" />
          <path fill="#2f7bd8" d="M13.500 14.500l10.500-1.500 2.300 12-10.500 1.500z" />
        </svg>
      </TaskButton>
      <TaskButton label="AXure日..."><FolderIcon /></TaskButton>
    </div>
    <div className="ml-1 flex shrink-0 gap-[3px]">
      <TaskButton label="MINGW6...">
        <svg width="32" height="32" viewBox="0 0 32 32">
          <path fill="#f07070" d="M16 0l7 7-7 7-7-7z" />
          <path fill="#74a8f5" d="M8 8l7 7-7 8-8-8z" />
          <path fill="#7fcf4f" d="M24 8l8 7-8 8-7-8z" />
          <path fill="#fbdc6a" d="M16 17l7 7-7 8-7-8z" />
          <path fill="none" stroke="#3b4a5a" strokeWidth="2" d="M16 7v17M16 12l6 4" />
          <circle cx="16" cy="24" r="2" fill="#3b4a5a" />
          <circle cx="23" cy="16" r="2" fill="#3b4a5a" />
        </svg>
      </TaskButton>
      <TaskButton label="Axure笔..." active>
        <svg width="32" height="32" viewBox="0 0 32 32">
          <path fill="#8a0bab" d="M0 0h5v32H0z" />
          <path fill="#a817c8" d="M7 0h25v32H7z" />
          <text x="11" y="28" fontSize="15" fontWeight="bold" fontFamily="Noto Sans" fill="#fff">RP</text>
        </svg>
      </TaskButton>
      <TaskButton label="Axure母...">
        <svg width="30" height="32" viewBox="0 0 30 32">
          <path fill="#f5f9fd" stroke="#2a66b0" strokeWidth="1.500" d="M4 2h23v26H1V6z" />
          <text x="2" y="22" fontSize="21" fontWeight="bold" fontFamily="Liberation Serif" fill="#1c5aa8">W</text>
          <path fill="#fff" stroke="#9bb5d0" d="M16 19h12v8H16z" />
        </svg>
      </TaskButton>
    </div>

    <div className="ml-auto flex shrink-0 items-center gap-[7px] pb-1 text-[11px] text-white">
      <span className="font-['Liberation_Mono'] text-[12px] leading-4">CH</span>
      <TrayIcon><path fill="#fbb800" d="M0 0h16v16H0z" /><path fill="#222" d="M4 2l2.500 1v6.500L10 8 8.500 7l-.7-2L13 7v2.500l-6.500 4L4 12z" /></TrayIcon>
      <TrayIcon>
        <circle cx="8" cy="8" r="7.300" fill="#12129c" stroke="#b9c4e0" />
        <path stroke="#fff" strokeWidth="1.800" d="M5.500 6c0-3.500 5-3.500 5-.5C10.500 7.500 8 7.500 8 9.500M8 11v2" />
      </TrayIcon>
      <svg width="9" height="20" viewBox="0 0 9 20" fill="none"><path stroke="#fff" d="M.5 3.500h5v4h-5zM2.500 3V.5h6v4H6" /><path fill="#fff" d="M2 15h6l-3 3z" /></svg>
    </div>
    <div className="ml-2.5 flex shrink-0 items-center gap-2 pt-0.5">
      <TrayIcon><path fill="#f5c665" d="M2 1h12v9l-6 6-6-6z" /><path stroke="#9c6a10" d="M5.500 1v11M8 1v14M10.500 1v11" /></TrayIcon>
      <TrayIcon><path fill="#35a8e8" d="M1 1l14 7L1 15z" /><path fill="#8bd33c" d="M1 8l14 0L1 15z" /><path fill="#fff" d="M6 5l5 3-5 3z" /></TrayIcon>
      <TrayIcon><path fill="#1c8ff0" d="M0 0h16v16H0z" /><path fill="#fff" d="M2 2h2v3H2zM2 7h2v3H2zM2 12h2v2H2zM6 2h8v5H6zM6 9h8v5H6z" /></TrayIcon>
      <TrayIcon><path fill="#3f9be8" d="M0 0h16v16H0z" /><g stroke="#fff" strokeWidth="1.700"><circle cx="8" cy="5.500" r="2.200" /><circle cx="4.800" cy="9.800" r="2.200" /><circle cx="11.200" cy="9.800" r="2.200" /></g></TrayIcon>
      <TrayIcon><path fill="#e8e8e8" stroke="#888" d="M2 2l6-1.500L14 2v6c0 4-3 6-6 7.500C5 14 2 12 2 8z" /><path fill="#777" d="M8 1v7H2V2zM8 8h6c0 4-3 6-6 7z" /></TrayIcon>
      <TrayIcon><rect width="16" height="16" rx="3" fill="#e6200c" /><path stroke="#fff" strokeWidth="1.400" d="M10 3c-2-.5-2.500 1-2 2.500l1 4c0 1.500-2.500 1.500-2.500 0 0-2 4-3 5-.5 1 3-1.500 4.500-3.500 4.500-4.500 0-5.500-5.500-2-7.500" /></TrayIcon>
      <TrayIcon><path stroke="#8a3a44" d="M6 2L1 8l5 6" /><path fill="#dc1420" d="M9.500 2L16 8l-6.500 6L3.500 8z" /></TrayIcon>
      <TrayIcon><circle cx="8" cy="8" r="6.500" fill="#4fb548" stroke="#d2ecc8" /><path stroke="#fff" strokeWidth="1.800" d="M6 4.500v7M10.500 4.500L7 8l3.500 3.500" /></TrayIcon>
      <TrayIcon><path fill="#3fa05a" stroke="#6fc488" d="M.5.5h15v15H.5z" /><path stroke="#fff" strokeWidth="2" d="M5 13V4h7M5 8h4" /></TrayIcon>
      <TrayIcon><path fill="#15180f" d="M0 2h16v13H0z" /><path stroke="#76b900" strokeWidth="1.300" d="M2 8c3-4 8-4 11 0-3 4-8 4-11 0zM5 8c1.500-2 4-2 5 0-1 1.500-3 1.500-5 0z" /><path stroke="#ffcf00" strokeWidth="2" d="M14 7v5M14 13.500v2" /></TrayIcon>
      <TrayIcon><path fill="#dfe8d8" stroke="#8fae80" d="M2 1h10v9l-5 4-5-4z" /><circle cx="11" cy="11" r="5" fill="#2a9e3c" /><path stroke="#fff" strokeWidth="1.600" d="M8.500 11l2 2 3-3.500" /></TrayIcon>
      <TrayIcon><path fill="#5db82c" d="M1 1h9l-2 3 3 3H4L1 4z" /><path fill="#2b8f7a" d="M4 6h8l3 3H7z" /><path fill="#1c9fc8" d="M7 9h8l-4 6H2l3-3z" /></TrayIcon>
      <TrayIcon><path stroke="#fff" strokeWidth="1.500" d="M2.500 1v15" /><path fill="#fff" d="M3 2h5l2 1h4v7H9L8 9H3z" /><circle cx="11" cy="11.500" r="4.500" fill="#d3271c" /><path stroke="#fff" strokeWidth="1.500" d="M9 9.500l4 4M13 9.500l-4 4" /></TrayIcon>
      <TrayIcon><path fill="#fff" d="M1 12h2v2H1zM4 10h2v4H4zM7 8h2v6H7zM10 5h2v9h-2zM13 2h2v12h-2z" /></TrayIcon>
      <TrayIcon><path fill="#fff" d="M1 5h3l4-4v14l-4-4H1z" /><path stroke="#fff" d="M10 5c1.500 2 1.500 4 0 6M12 3c2.500 3 2.500 7 0 10" /></TrayIcon>
      <TrayIcon><path stroke="#fff" strokeWidth="1.500" d="M9 14.500H3v-12h6V5M5 1h2" /><path fill="#fff" d="M8 6h7v4l-2 2v4h-2v-4l-3-2zM9 3h1.500v3H9zM12.500 3H14v3h-1.500z" /></TrayIcon>
    </div>
    <div className="ml-[15px] w-16 shrink-0 pb-0.5 text-center text-[12px] leading-[18px] text-white">
      21:51
      <br />
      2018/4/5
    </div>
    <button type="button" aria-label="显示桌面" className="ml-1.5 h-[39px] w-3.5 shrink-0 border border-[#6d8aa5] bg-linear-to-b from-[#56748f] to-[#1d4166]" />
  </footer>
);

export default function App() {
  return (
    <div className="relative flex h-screen flex-col overflow-hidden bg-white font-['Liberation_Sans','Noto_Sans_CJK_SC',sans-serif]">
      <TitleBar />
      <MenuBar />
      <Toolbar />
      <FormatBar />
      <div className="flex min-h-0 flex-1">
        <div className="flex w-[326px] shrink-0 flex-col">
          <PagesPanel />
          <LibraryPanel />
          <MastersPanel />
        </div>
        <Workspace />
        <Inspector />
      </div>
      <Taskbar />
      <UploadWidget />
      <ImeBar />
    </div>
  );
}
